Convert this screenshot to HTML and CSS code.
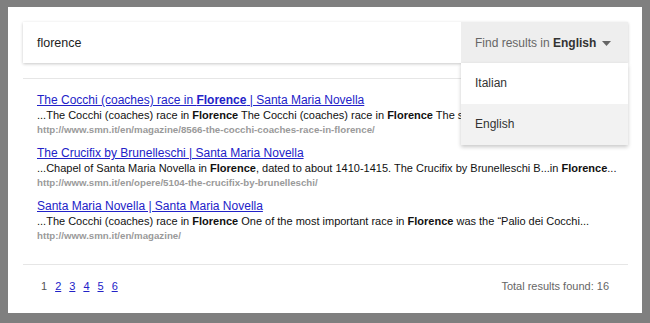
FILE: index.html
```html
<!DOCTYPE html>
<html lang="en">
<head>
<meta charset="utf-8">
<title>Search results</title>
<link rel="stylesheet" href="styles.css">
</head>
<body>
<div class="card">
  <div class="search-bar">
    <div class="query">florence</div>
    <div class="lang">
      <div class="lang-btn">
        <span class="lang-label">Find results in <b>English</b></span>
        <svg class="caret" width="9" height="5" viewBox="0 0 9 5"><path d="M0 0 L9 0 L4.5 5 Z" fill="#666"/></svg>
      </div>
      <ul class="lang-menu">
        <li class="lang-item">Italian</li>
        <li class="lang-item active">English</li>
      </ul>
    </div>
  </div>
  <div class="divider top"></div>
  <div class="results">
    <div class="result">
      <a class="title" href="#">The Cocchi (coaches) race in <b>Florence</b> | Santa Maria Novella</a>
      <div class="snippet">...The Cocchi (coaches) race in <b>Florence</b> The Cocchi (coaches) race in <b>Florence</b> The sound of the horses and the cheering crowd...</div>
      <div class="url">http://www.smn.it/en/magazine/8566-the-cocchi-coaches-race-in-florence/</div>
    </div>
    <div class="result">
      <a class="title" href="#">The Crucifix by Brunelleschi | Santa Maria Novella</a>
      <div class="snippet">...Chapel of Santa Maria Novella in <b>Florence</b>, dated to about 1410-1415. The Crucifix by Brunelleschi B...in <b>Florence</b>...</div>
      <div class="url">http://www.smn.it/en/opere/5104-the-crucifix-by-brunelleschi/</div>
    </div>
    <div class="result">
      <a class="title" href="#">Santa Maria Novella | Santa Maria Novella</a>
      <div class="snippet">...The Cocchi (coaches) race in <b>Florence</b> One of the most important race in <b>Florence</b> was the “Palio dei Cocchi...</div>
      <div class="url">http://www.smn.it/en/magazine/</div>
    </div>
  </div>
  <div class="divider"></div>
  <div class="footer">
    <div class="pages">
      <span class="page current">1</span>
      <a class="page" href="#">2</a>
      <a class="page" href="#">3</a>
      <a class="page" href="#">4</a>
      <a class="page" href="#">5</a>
      <a class="page" href="#">6</a>
    </div>
    <div class="total">Total results found: 16</div>
  </div>
</div>
</body>
</html>
```
FILE: styles.css
```css
* { box-sizing: border-box; }
html, body { margin: 0; padding: 0; }
body {
  background: #7f7f7f;
  font-family: "Liberation Sans", Arial, sans-serif;
  height: 323px;
  padding: 7px 8px 10px 8px;
}
.card {
  background: #fff;
  height: 306px;
  padding: 15px 14px 0 15px;
}
.search-bar {
  display: flex;
  height: 41px;
  background: #fff;
  box-shadow: 0 1px 3px rgba(0,0,0,0.22);
  position: relative;
  z-index: 2;
}
.query {
  flex: 1;
  padding-left: 14px;
  font-size: 12.5px;
  line-height: 42px;
  color: #222;
}
.lang {
  width: 167px;
  position: relative;
}
.lang-btn {
  height: 41px;
  background: #eeeeee;
  display: flex;
  align-items: center;
  padding: 1px 17px 0 14px;
  font-size: 12px;
  color: #666;
  white-space: nowrap;
}
.lang-btn b { color: #333; }
.lang-label { flex: 1; }
.caret { display: block; }
.lang-menu {
  list-style: none;
  margin: 0;
  padding: 0;
  position: absolute;
  top: 41px;
  left: 0;
  right: 0;
  background: #fff;
  box-shadow: 0 2px 4px rgba(0,0,0,0.22);
}
.lang-item {
  height: 41px;
  line-height: 41px;
  padding-left: 14px;
  font-size: 12px;
  color: #333;
}
.lang-item.active { background: #f2f2f2; }
.divider {
  height: 1px;
  background: #e6e6e6;
}
.divider.top { margin-top: 15px; }
.results {
  display: flex;
  flex-direction: column;
  gap: 9px;
  padding: 13px 0 22px 14px;
}
.title {
  display: block;
  font-size: 12px;
  line-height: 16px;
  color: #2222c8;
  text-decoration: underline;
  white-space: nowrap;
}
.snippet {
  font-size: 11px;
  line-height: 15px;
  color: #111;
  white-space: nowrap;
  overflow: hidden;
  text-overflow: ellipsis;
}
.url {
  font-size: 9.7px;
  line-height: 13px;
  font-weight: bold;
  color: #9a9a9a;
  white-space: nowrap;
}
.footer {
  display: flex;
  justify-content: space-between;
  align-items: center;
  padding: 13px 19px 0 18px;
  font-size: 11px;
  line-height: 16px;
}
.pages { display: flex; gap: 8px; }
.page { color: #2222c8; text-decoration: underline; }
.page.current { color: #555; text-decoration: none; }
.total { color: #666; }
```
